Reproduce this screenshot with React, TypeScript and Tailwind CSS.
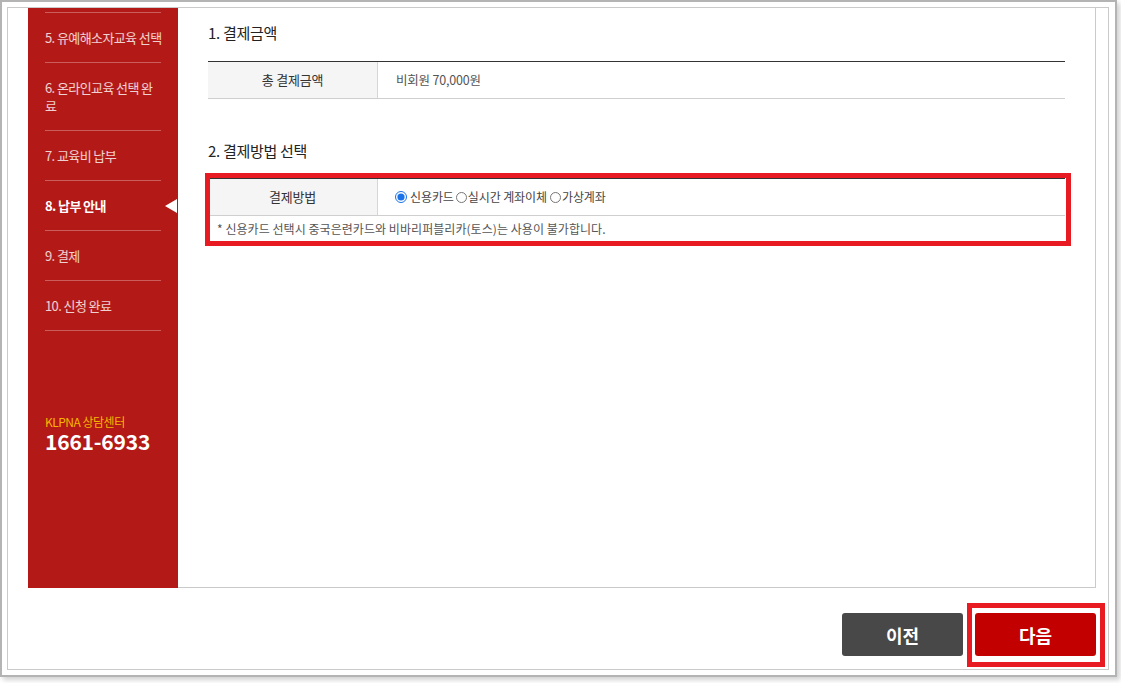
import React from "react";

const items: { lines: string[]; active?: boolean }[] = [
  { lines: ["5. 유예해소자교육 선택"] },
  { lines: ["6. 온라인교육 선택 완", "료"] },
  { lines: ["7. 교육비 납부"] },
  { lines: ["8. 납부 안내"], active: true },
  { lines: ["9. 결제"] },
  { lines: ["10. 신청 완료"] },
];

export default function App() {
  return (
    <div className="bg-white w-[1121px] h-[683px] [font-family:'Noto_Sans_CJK_KR','Noto_Sans',sans-serif]">
      <div className="w-[1117px] h-[677px] border-2 border-[#b4b4b4] pt-[5px] pl-[5px] pr-[6px] pb-[5px] shadow-[3px_3px_5px_rgba(0,0,0,0.18)]">
        <div className="h-full border border-[#cacaca] pl-[20px] pr-[12px] flex flex-col">
          {/* main box */}
          <div className="flex h-[580px]">
            {/* sidebar */}
            <aside className="w-[150px] bg-[#b21917] pt-[4px] flex flex-col">
              <ul className="mx-[17px] border-t border-white/30">
                {items.map((it, i) => (
                  <li
                    key={i}
                    className={
                      "relative border-b border-white/30 pt-[16px] pb-[15px] leading-[18px] text-[13px] tracking-[-0.6px] " +
                      (it.active ? "text-white font-bold" : "text-white/80")
                    }
                  >
                    {it.lines.map((l, j) => (
                      <div key={j} className="whitespace-nowrap">
                        {l}
                      </div>
                    ))}
                    {it.active && (
                      <span className="absolute right-[-16px] top-1/2 -translate-y-1/2 w-0 h-0 border-t-[7px] border-b-[7px] border-r-[12px] border-t-transparent border-b-transparent border-r-white" />
                    )}
                  </li>
                ))}
              </ul>
              <div className="mx-[17px] mt-[84px] flex flex-col">
                <span className="text-[12px] leading-[14px] tracking-[-0.5px] text-[#f7b500]">KLPNA 상담센터</span>
                <span className="mt-[2px] text-[21px] leading-[21px] font-semibold text-white tracking-[-0.2px]">1661-6933</span>
              </div>
            </aside>

            {/* content */}
            <section className="flex-1 border-r border-b border-[#cacaca] pl-[30px] pr-[30px] pt-[15px]">
              <h2 className="text-[15px] leading-[20px] tracking-[-0.3px] text-[#222]">1. 결제금액</h2>
              <div className="mt-[18px] border-t border-[#333] border-b border-b-[#cfcfcf] flex h-[38px]">
                <div className="w-[170px] bg-[#f5f5f5] border-r border-[#d6d6d6] flex items-center justify-center text-[13px] tracking-[-0.2px] text-[#333]">
                  총 결제금액
                </div>
                <div className="flex items-center pl-[18px] text-[12.5px] tracking-[-0.2px] text-[#555]">비회원 70,000원</div>
              </div>

              <h2 className="mt-[42px] text-[15px] leading-[20px] tracking-[-0.3px] text-[#222]">2. 결제방법 선택</h2>
              <div className="relative mt-[17px]">
                <div className="border-t border-[#333]">
                  <div className="flex h-[37px] border-b border-[#cfcfcf]">
                    <div className="w-[170px] bg-[#f5f5f5] border-r border-[#d6d6d6] flex items-center justify-center text-[13px] tracking-[-0.2px] text-[#333]">
                      결제방법
                    </div>
                    <div className="flex items-center pl-[17px] text-[12px] tracking-[-0.1px] text-[#444]">
                      <label className="flex items-center">
                        <input type="radio" name="pay" defaultChecked className="m-0 w-[12px] h-[12px] accent-[#1a73e8]" />
                        <span className="ml-[3px]">신용카드</span>
                      </label>
                      <label className="flex items-center ml-[2px]">
                        <input type="radio" name="pay" className="m-0 w-[11px] h-[11px]" />
                        <span className="ml-[1px]">실시간 계좌이체</span>
                      </label>
                      <label className="flex items-center ml-[3px]">
                        <input type="radio" name="pay" className="m-0 w-[11px] h-[11px]" />
                        <span className="ml-[1px]">가상계좌</span>
                      </label>
                    </div>
                  </div>
                  <div className="h-[26px] border-b border-[#cfcfcf] flex items-center pl-[9px] text-[12px] tracking-[0.05px] text-[#555]">
                    * 신용카드 선택시 중국은련카드와 비바리퍼블리카(토스)는 사용이 불가합니다.
                  </div>
                </div>
                <div className="absolute -top-[5px] -left-[3px] -right-[6px] -bottom-[4px] border-[5px] border-[#e81a22] pointer-events-none" />
              </div>
            </section>
          </div>

          {/* buttons */}
          <div className="flex justify-end gap-[12px] pt-[25px]">
            <button className="w-[121px] h-[43px] rounded-[3px] bg-[#484848] text-white text-[18px] font-bold leading-none">
              이전
            </button>
            <div className="relative">
              <button className="w-[121px] h-[43px] rounded-[3px] bg-[#c30000] text-white text-[18px] font-bold leading-none">
                다음
              </button>
              <div className="absolute -top-[10px] -left-[8px] -right-[9px] -bottom-[11px] border-[5px] border-[#e81a22] pointer-events-none" />
            </div>
          </div>
        </div>
      </div>
    </div>
  );
}
